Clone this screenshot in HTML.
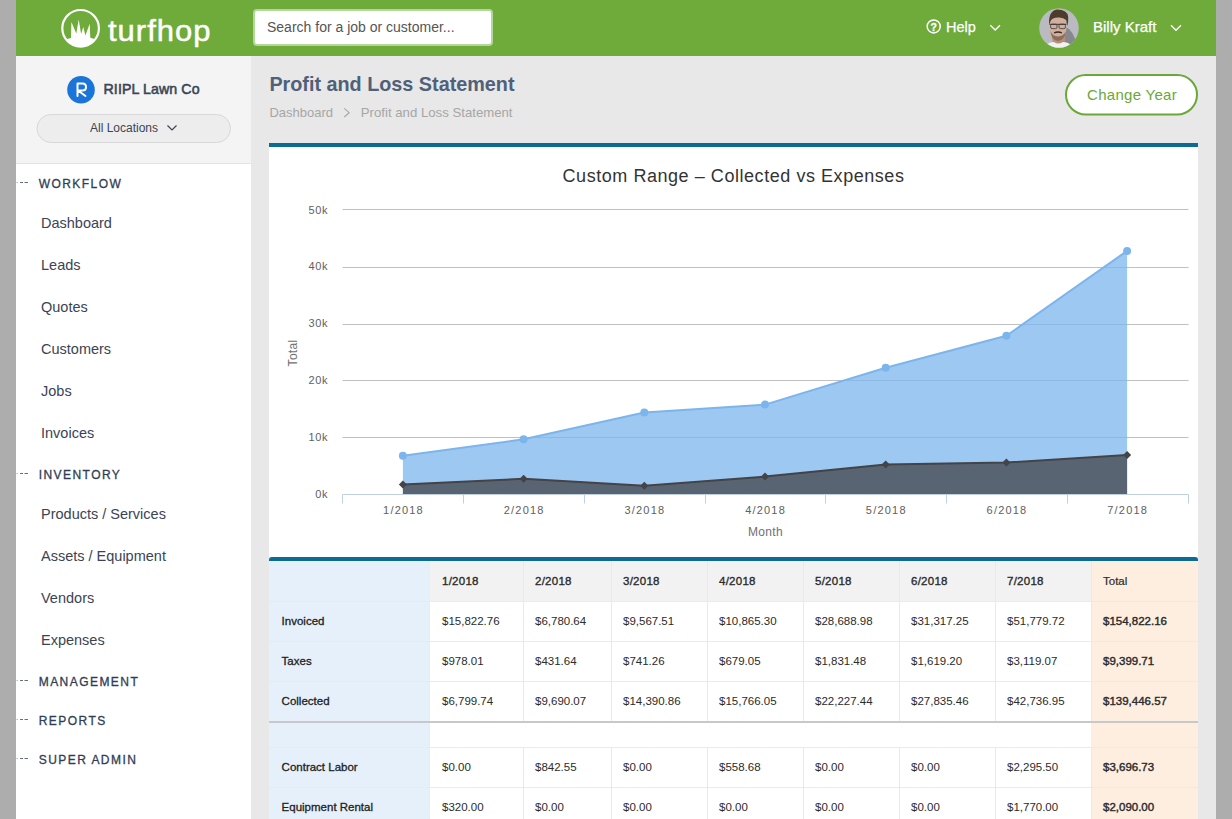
<!DOCTYPE html>
<html><head><meta charset="utf-8"><title>Profit and Loss Statement</title>
<style>
*{margin:0;padding:0}
html,body{width:1232px;height:819px;overflow:hidden;background:#adadad;font-family:"Liberation Sans",sans-serif}
</style></head><body>
<svg style="position:absolute;left:0;top:0" width="1232" height="819" viewBox="0 0 1232 819" font-family="Liberation Sans, sans-serif">
<rect x="0" y="0" width="1232" height="819" fill="#adadad"/>
<rect x="16" y="0" width="1200" height="819" fill="#e8e8e8"/>
<rect x="16" y="0" width="1200" height="56" fill="#6eab3b"/>
<rect x="16" y="56" width="235" height="763" fill="#fff"/>
<rect x="16" y="56" width="235" height="107" fill="#f4f4f4"/>
<rect x="16" y="163" width="235" height="1" fill="#e3e3e3"/>
<circle cx="80.6" cy="28.3" r="18.3" fill="none" stroke="#fff" stroke-width="2.2"/>
<path transform="translate(58 6)" d="M8 33.3 L13 32 L13.4 16.1 L18.3 27.4 L20.7 13.4 L23.1 28 L25.3 21 L27.4 29.6 L31.7 17.7 L32.3 31.7 L37.2 33.3 A18.3 18.3 0 0 1 8 33.3 Z" fill="#fff"/>
<g transform="translate(0 40.7) scale(1 0.95) translate(0 -40.7)"><text x="108.0" y="40.7" font-size="31" fill="#fff" font-weight="normal" letter-spacing="1" text-anchor="start" stroke="#fff" stroke-width="0.5">turfhop</text></g>
<rect x="254" y="10" width="238" height="35" rx="3" fill="#fff" stroke="#b4d59b" stroke-width="2"/>
<text x="267.0" y="31.7" font-size="14" fill="#555" font-weight="normal" letter-spacing="0" text-anchor="start" >Search for a job or customer...</text>
<circle cx="933.7" cy="26.4" r="6.5" fill="none" stroke="#fff" stroke-width="1.5"/>
<text x="933.8" y="30.6" font-size="10.5" fill="#fff" font-weight="bold" letter-spacing="0" text-anchor="middle" stroke="#fff" stroke-width="0.3">?</text>
<text x="946.0" y="31.8" font-size="14.5" fill="#fff" font-weight="normal" letter-spacing="0" text-anchor="start" stroke="#fff" stroke-width="0.25">Help</text>
<path d="M990.3 25.2 L995.2 30 L1000 25.2" fill="none" stroke="#fff" stroke-width="1.4"/>
<clipPath id="av"><circle cx="1059" cy="28" r="19.8"/></clipPath><filter id="bl" x="-20%" y="-20%" width="140%" height="140%"><feGaussianBlur stdDeviation="0.7"/></filter>
<g clip-path="url(#av)"><rect x="1038" y="7" width="42" height="42" fill="#b9bbc0"/><g filter="url(#bl)"><path d="M1064 26 Q1074 30 1077 46 L1062 48 Z" fill="#86888e"/><path d="M1052 37 Q1053 46 1056 48 L1063 48 Q1066 44 1065 37 Z" fill="#b8907a"/><path d="M1050 20 Q1050 15 1058 15 Q1066.5 15 1066.5 20 L1066.3 30 Q1066 39 1058 39.5 Q1050.3 39 1050 30 Z" fill="#d2ae9c"/><path d="M1049.2 25 Q1048 11 1057 9.5 Q1067.5 9.5 1068.2 17 Q1068.5 22 1067.2 26 L1066.2 20 Q1063 17 1058 17.5 Q1052 17.5 1050.6 21 Z" fill="#4d3a2f"/><path d="M1050.5 31 Q1051 40 1058 41 Q1065 40 1066 31 Q1064 36 1058 36.5 Q1052 36 1050.5 31 Z" fill="#8c6c5c"/><path d="M1054 33 Q1058 31 1062 33" stroke="#3b2a22" stroke-width="1.3" fill="none"/><path d="M1043 50 Q1046 42 1054 42 Q1058 45 1063 42 Q1071 42 1074 50 Z" fill="#f2f2f2"/></g><path d="M1049.5 24.3 H1066.5" stroke="#333" stroke-width="1"/><rect x="1050.6" y="24.2" width="6.4" height="4.4" rx="1.5" fill="none" stroke="#3a3a3a" stroke-width="0.8"/><rect x="1059" y="24.2" width="6.4" height="4.4" rx="1.5" fill="none" stroke="#3a3a3a" stroke-width="0.8"/></g>
<text x="1093.0" y="32.0" font-size="15" fill="#fff" font-weight="normal" letter-spacing="0" text-anchor="start" stroke="#fff" stroke-width="0.25">Billy Kraft</text>
<path d="M1171 25.3 L1176 30.2 L1181 25.3" fill="none" stroke="#fff" stroke-width="1.4"/>
<circle cx="81" cy="89.8" r="13.8" fill="#1b74d8"/>
<path d="M77.5 96 V83.5 H82.5 Q86 83.5 86 87 Q86 90.5 82.5 90.5 H78 L85.5 96" fill="none" stroke="#fff" stroke-width="2" stroke-linecap="round" stroke-linejoin="round"/>
<text x="103.5" y="94.4" font-size="14.2" fill="#3a4656" font-weight="normal" letter-spacing="0.1" text-anchor="start" stroke="#3a4656" stroke-width="0.55">RIIPL Lawn Co</text>
<rect x="37" y="114.5" width="193.5" height="28" rx="14" fill="#ededed" stroke="#d8d8d8" stroke-width="1"/>
<text x="90.0" y="132.1" font-size="12" fill="#3a4656" font-weight="normal" letter-spacing="0" text-anchor="start" >All Locations</text>
<path d="M167.5 125.5 L172 130 L176.5 125.5" fill="none" stroke="#3a4656" stroke-width="1.2"/>
<path d="M16.5 182.5 H18" stroke="#b5bbc6" stroke-width="1"/><path d="M20 182.5 H23 M24.5 182.5 H28" stroke="#646e84" stroke-width="1"/>
<text x="38.7" y="188.0" font-size="12" fill="#2f3e56" font-weight="normal" letter-spacing="1.45" text-anchor="start" stroke="#2f3e56" stroke-width="0.3">WORKFLOW</text>
<text x="41.0" y="227.6" font-size="14.5" fill="#3b4454" font-weight="normal" letter-spacing="0" text-anchor="start" >Dashboard</text>
<text x="41.0" y="269.6" font-size="14.5" fill="#3b4454" font-weight="normal" letter-spacing="0" text-anchor="start" >Leads</text>
<text x="41.0" y="311.6" font-size="14.5" fill="#3b4454" font-weight="normal" letter-spacing="0" text-anchor="start" >Quotes</text>
<text x="41.0" y="353.6" font-size="14.5" fill="#3b4454" font-weight="normal" letter-spacing="0" text-anchor="start" >Customers</text>
<text x="41.0" y="395.6" font-size="14.5" fill="#3b4454" font-weight="normal" letter-spacing="0" text-anchor="start" >Jobs</text>
<text x="41.0" y="437.6" font-size="14.5" fill="#3b4454" font-weight="normal" letter-spacing="0" text-anchor="start" >Invoices</text>
<path d="M16.5 473.5 H18" stroke="#b5bbc6" stroke-width="1"/><path d="M20 473.5 H23 M24.5 473.5 H28" stroke="#646e84" stroke-width="1"/>
<text x="38.7" y="479.0" font-size="12" fill="#2f3e56" font-weight="normal" letter-spacing="1.45" text-anchor="start" stroke="#2f3e56" stroke-width="0.3">INVENTORY</text>
<text x="41.0" y="518.6" font-size="14.5" fill="#3b4454" font-weight="normal" letter-spacing="0" text-anchor="start" >Products / Services</text>
<text x="41.0" y="560.6" font-size="14.5" fill="#3b4454" font-weight="normal" letter-spacing="0" text-anchor="start" >Assets / Equipment</text>
<text x="41.0" y="602.6" font-size="14.5" fill="#3b4454" font-weight="normal" letter-spacing="0" text-anchor="start" >Vendors</text>
<text x="41.0" y="644.6" font-size="14.5" fill="#3b4454" font-weight="normal" letter-spacing="0" text-anchor="start" >Expenses</text>
<path d="M16.5 680.5 H18" stroke="#b5bbc6" stroke-width="1"/><path d="M20 680.5 H23 M24.5 680.5 H28" stroke="#646e84" stroke-width="1"/>
<text x="38.7" y="686.0" font-size="12" fill="#2f3e56" font-weight="normal" letter-spacing="1.45" text-anchor="start" stroke="#2f3e56" stroke-width="0.3">MANAGEMENT</text>
<path d="M16.5 719.5 H18" stroke="#b5bbc6" stroke-width="1"/><path d="M20 719.5 H23 M24.5 719.5 H28" stroke="#646e84" stroke-width="1"/>
<text x="38.7" y="725.0" font-size="12" fill="#2f3e56" font-weight="normal" letter-spacing="1.45" text-anchor="start" stroke="#2f3e56" stroke-width="0.3">REPORTS</text>
<path d="M16.5 758.5 H18" stroke="#b5bbc6" stroke-width="1"/><path d="M20 758.5 H23 M24.5 758.5 H28" stroke="#646e84" stroke-width="1"/>
<text x="38.7" y="764.0" font-size="12" fill="#2f3e56" font-weight="normal" letter-spacing="1.45" text-anchor="start" stroke="#2f3e56" stroke-width="0.3">SUPER ADMIN</text>
<text x="269.4" y="90.6" font-size="19.8" fill="#4f6078" font-weight="bold" letter-spacing="0" text-anchor="start" >Profit and Loss Statement</text>
<text x="269.4" y="117.0" font-size="13" fill="#a6a6a6" font-weight="normal" letter-spacing="0" text-anchor="start" >Dashboard</text>
<path d="M344.2 108.3 L349.2 112.7 L344.2 117" fill="none" stroke="#a6a6a6" stroke-width="1.1"/>
<text x="360.8" y="117.0" font-size="13.2" fill="#a6a6a6" font-weight="normal" letter-spacing="0" text-anchor="start" >Profit and Loss Statement</text>
<rect x="1066" y="75" width="131" height="39.5" rx="19.75" fill="#fff" stroke="#6aa838" stroke-width="2"/>
<text x="1087.0" y="99.6" font-size="15" fill="#6aa838" font-weight="normal" letter-spacing="0.3" text-anchor="start" >Change Year</text>
<rect x="269" y="143" width="929" height="414" fill="#fff"/>
<rect x="269" y="143" width="929" height="4" fill="#0b6b93"/>
<path d="M342.5 209.5 H1188.5" stroke="#c0c0c0" stroke-width="1"/>
<path d="M342.5 267.5 H1188.5" stroke="#c0c0c0" stroke-width="1"/>
<path d="M342.5 324.5 H1188.5" stroke="#c0c0c0" stroke-width="1"/>
<path d="M342.5 380.5 H1188.5" stroke="#c0c0c0" stroke-width="1"/>
<path d="M342.5 437.5 H1188.5" stroke="#c0c0c0" stroke-width="1"/>
<path d="M402.9 494.5 L402.9 455.7 523.6 439.3 644.3 412.5 765.0 404.6 885.7 367.8 1006.4 335.8 1127.1 250.9 L1127.1 494.5 Z" fill="#7cb5ec" fill-opacity="0.75"/>
<path d="M402.9 455.7 523.6 439.3 644.3 412.5 765.0 404.6 885.7 367.8 1006.4 335.8 1127.1 250.9" fill="none" stroke="#7cb5ec" stroke-width="2" stroke-linejoin="round"/>
<path d="M402.9 494.5 L402.9 484.5 523.6 478.8 644.3 485.8 765.0 476.6 885.7 464.6 1006.4 462.6 1127.1 455.0 L1127.1 494.5 Z" fill="#434348" fill-opacity="0.75"/>
<path d="M402.9 484.5 523.6 478.8 644.3 485.8 765.0 476.6 885.7 464.6 1006.4 462.6 1127.1 455.0" fill="none" stroke="#434348" stroke-width="2" stroke-linejoin="round"/>
<circle cx="402.9" cy="455.7" r="4" fill="#7cb5ec"/>
<circle cx="523.6" cy="439.3" r="4" fill="#7cb5ec"/>
<circle cx="644.3" cy="412.5" r="4" fill="#7cb5ec"/>
<circle cx="765.0" cy="404.6" r="4" fill="#7cb5ec"/>
<circle cx="885.7" cy="367.8" r="4" fill="#7cb5ec"/>
<circle cx="1006.4" cy="335.8" r="4" fill="#7cb5ec"/>
<circle cx="1127.1" cy="250.9" r="4" fill="#7cb5ec"/>
<path d="M402.9 480.5 l4 4 l-4 4 l-4 -4 Z" fill="#434348"/>
<path d="M523.6 474.8 l4 4 l-4 4 l-4 -4 Z" fill="#434348"/>
<path d="M644.3 481.8 l4 4 l-4 4 l-4 -4 Z" fill="#434348"/>
<path d="M765.0 472.6 l4 4 l-4 4 l-4 -4 Z" fill="#434348"/>
<path d="M885.7 460.6 l4 4 l-4 4 l-4 -4 Z" fill="#434348"/>
<path d="M1006.4 458.6 l4 4 l-4 4 l-4 -4 Z" fill="#434348"/>
<path d="M1127.1 451.0 l4 4 l-4 4 l-4 -4 Z" fill="#434348"/>
<path d="M342.5 494.5 H1188.5" stroke="#c0d0e0" stroke-width="1"/>
<path d="M342.5 494.5 V503.5" stroke="#c0d0e0" stroke-width="1"/>
<path d="M463.5 494.5 V503.5" stroke="#c0d0e0" stroke-width="1"/>
<path d="M584.5 494.5 V503.5" stroke="#c0d0e0" stroke-width="1"/>
<path d="M705.5 494.5 V503.5" stroke="#c0d0e0" stroke-width="1"/>
<path d="M825.5 494.5 V503.5" stroke="#c0d0e0" stroke-width="1"/>
<path d="M946.5 494.5 V503.5" stroke="#c0d0e0" stroke-width="1"/>
<path d="M1067.5 494.5 V503.5" stroke="#c0d0e0" stroke-width="1"/>
<path d="M1188.5 494.5 V503.5" stroke="#c0d0e0" stroke-width="1"/>
<text x="328.0" y="498.0" font-size="11" fill="#606060" font-weight="normal" letter-spacing="0.6" text-anchor="end" >0k</text>
<text x="328.0" y="441.0" font-size="11" fill="#606060" font-weight="normal" letter-spacing="0.6" text-anchor="end" >10k</text>
<text x="328.0" y="384.0" font-size="11" fill="#606060" font-weight="normal" letter-spacing="0.6" text-anchor="end" >20k</text>
<text x="328.0" y="327.0" font-size="11" fill="#606060" font-weight="normal" letter-spacing="0.6" text-anchor="end" >30k</text>
<text x="328.0" y="270.0" font-size="11" fill="#606060" font-weight="normal" letter-spacing="0.6" text-anchor="end" >40k</text>
<text x="328.0" y="213.7" font-size="11" fill="#606060" font-weight="normal" letter-spacing="0.6" text-anchor="end" >50k</text>
<text x="403.5" y="514.0" font-size="11" fill="#606060" font-weight="normal" letter-spacing="1.2" text-anchor="middle" >1/2018</text>
<text x="524.2" y="514.0" font-size="11" fill="#606060" font-weight="normal" letter-spacing="1.2" text-anchor="middle" >2/2018</text>
<text x="644.9" y="514.0" font-size="11" fill="#606060" font-weight="normal" letter-spacing="1.2" text-anchor="middle" >3/2018</text>
<text x="765.6" y="514.0" font-size="11" fill="#606060" font-weight="normal" letter-spacing="1.2" text-anchor="middle" >4/2018</text>
<text x="886.3" y="514.0" font-size="11" fill="#606060" font-weight="normal" letter-spacing="1.2" text-anchor="middle" >5/2018</text>
<text x="1007.0" y="514.0" font-size="11" fill="#606060" font-weight="normal" letter-spacing="1.2" text-anchor="middle" >6/2018</text>
<text x="1127.7" y="514.0" font-size="11" fill="#606060" font-weight="normal" letter-spacing="1.2" text-anchor="middle" >7/2018</text>
<text x="765.5" y="536.0" font-size="12" fill="#707070" font-weight="normal" letter-spacing="0.3" text-anchor="middle" >Month</text>
<text x="0" y="0" font-size="12" fill="#707070" letter-spacing="0.3" text-anchor="middle" transform="translate(297 353) rotate(-90)">Total</text>
<text x="733.5" y="182.0" font-size="18" fill="#333" font-weight="normal" letter-spacing="0.55" text-anchor="middle" >Custom Range – Collected vs Expenses</text>
<path d="M269 561 V560 Q269 557 272 557 H1195 Q1198 557 1198 560 V561 Z" fill="#0b6b93"/>
<rect x="269" y="561" width="929" height="258" fill="#fff"/>
<rect x="269" y="561" width="160" height="258" fill="#e5f0fa"/>
<rect x="429" y="561" width="1" height="258" fill="#ececec"/>
<rect x="430" y="561" width="661" height="40" fill="#f2f2f2"/>
<rect x="1091" y="561" width="107" height="258" fill="#fdeee0"/>
<rect x="269" y="601" width="929" height="1" fill="#e9e9e9" fill-opacity="0.9"/>
<rect x="269" y="641" width="929" height="1" fill="#e9e9e9" fill-opacity="0.9"/>
<rect x="269" y="681" width="929" height="1" fill="#e9e9e9" fill-opacity="0.9"/>
<rect x="269" y="747" width="929" height="1" fill="#e9e9e9" fill-opacity="0.9"/>
<rect x="269" y="787" width="929" height="1" fill="#e9e9e9" fill-opacity="0.9"/>
<rect x="269" y="721" width="929" height="2" fill="#c8c8c8"/>
<rect x="523" y="561" width="1" height="160" fill="#e9e9e9"/>
<rect x="523" y="747" width="1" height="72" fill="#e9e9e9"/>
<rect x="611" y="561" width="1" height="160" fill="#e9e9e9"/>
<rect x="611" y="747" width="1" height="72" fill="#e9e9e9"/>
<rect x="707" y="561" width="1" height="160" fill="#e9e9e9"/>
<rect x="707" y="747" width="1" height="72" fill="#e9e9e9"/>
<rect x="803" y="561" width="1" height="160" fill="#e9e9e9"/>
<rect x="803" y="747" width="1" height="72" fill="#e9e9e9"/>
<rect x="899" y="561" width="1" height="160" fill="#e9e9e9"/>
<rect x="899" y="747" width="1" height="72" fill="#e9e9e9"/>
<rect x="995" y="561" width="1" height="160" fill="#e9e9e9"/>
<rect x="995" y="747" width="1" height="72" fill="#e9e9e9"/>
<rect x="1091" y="561" width="1" height="160" fill="#e9e9e9"/>
<rect x="1091" y="747" width="1" height="72" fill="#e9e9e9"/>
<text x="442.0" y="585.0" font-size="11.5" fill="#2b2b2b" font-weight="normal" letter-spacing="0.25" text-anchor="start" stroke="#2b2b2b" stroke-width="0.35">1/2018</text>
<text x="535.0" y="585.0" font-size="11.5" fill="#2b2b2b" font-weight="normal" letter-spacing="0.25" text-anchor="start" stroke="#2b2b2b" stroke-width="0.35">2/2018</text>
<text x="623.0" y="585.0" font-size="11.5" fill="#2b2b2b" font-weight="normal" letter-spacing="0.25" text-anchor="start" stroke="#2b2b2b" stroke-width="0.35">3/2018</text>
<text x="719.0" y="585.0" font-size="11.5" fill="#2b2b2b" font-weight="normal" letter-spacing="0.25" text-anchor="start" stroke="#2b2b2b" stroke-width="0.35">4/2018</text>
<text x="815.0" y="585.0" font-size="11.5" fill="#2b2b2b" font-weight="normal" letter-spacing="0.25" text-anchor="start" stroke="#2b2b2b" stroke-width="0.35">5/2018</text>
<text x="911.0" y="585.0" font-size="11.5" fill="#2b2b2b" font-weight="normal" letter-spacing="0.25" text-anchor="start" stroke="#2b2b2b" stroke-width="0.35">6/2018</text>
<text x="1007.0" y="585.0" font-size="11.5" fill="#2b2b2b" font-weight="normal" letter-spacing="0.25" text-anchor="start" stroke="#2b2b2b" stroke-width="0.35">7/2018</text>
<text x="1103.0" y="585.0" font-size="11.5" fill="#2b2b2b" font-weight="normal" letter-spacing="0" text-anchor="start" stroke="#2b2b2b" stroke-width="0.2">Total</text>
<text x="281.6" y="625.0" font-size="11.5" fill="#222" font-weight="normal" letter-spacing="0" text-anchor="start" stroke="#222" stroke-width="0.3">Invoiced</text>
<text x="442.0" y="625.0" font-size="11.5" fill="#2b2b2b" font-weight="normal" letter-spacing="0" text-anchor="start" >$15,822.76</text>
<text x="535.0" y="625.0" font-size="11.5" fill="#2b2b2b" font-weight="normal" letter-spacing="0" text-anchor="start" >$6,780.64</text>
<text x="623.0" y="625.0" font-size="11.5" fill="#2b2b2b" font-weight="normal" letter-spacing="0" text-anchor="start" >$9,567.51</text>
<text x="719.0" y="625.0" font-size="11.5" fill="#2b2b2b" font-weight="normal" letter-spacing="0" text-anchor="start" >$10,865.30</text>
<text x="815.0" y="625.0" font-size="11.5" fill="#2b2b2b" font-weight="normal" letter-spacing="0" text-anchor="start" >$28,688.98</text>
<text x="911.0" y="625.0" font-size="11.5" fill="#2b2b2b" font-weight="normal" letter-spacing="0" text-anchor="start" >$31,317.25</text>
<text x="1007.0" y="625.0" font-size="11.5" fill="#2b2b2b" font-weight="normal" letter-spacing="0" text-anchor="start" >$51,779.72</text>
<text x="1103.0" y="625.0" font-size="11.5" fill="#2b2b2b" font-weight="normal" letter-spacing="0" text-anchor="start" stroke="#2b2b2b" stroke-width="0.4">$154,822.16</text>
<text x="281.6" y="665.0" font-size="11.5" fill="#222" font-weight="normal" letter-spacing="0" text-anchor="start" stroke="#222" stroke-width="0.3">Taxes</text>
<text x="442.0" y="665.0" font-size="11.5" fill="#2b2b2b" font-weight="normal" letter-spacing="0" text-anchor="start" >$978.01</text>
<text x="535.0" y="665.0" font-size="11.5" fill="#2b2b2b" font-weight="normal" letter-spacing="0" text-anchor="start" >$431.64</text>
<text x="623.0" y="665.0" font-size="11.5" fill="#2b2b2b" font-weight="normal" letter-spacing="0" text-anchor="start" >$741.26</text>
<text x="719.0" y="665.0" font-size="11.5" fill="#2b2b2b" font-weight="normal" letter-spacing="0" text-anchor="start" >$679.05</text>
<text x="815.0" y="665.0" font-size="11.5" fill="#2b2b2b" font-weight="normal" letter-spacing="0" text-anchor="start" >$1,831.48</text>
<text x="911.0" y="665.0" font-size="11.5" fill="#2b2b2b" font-weight="normal" letter-spacing="0" text-anchor="start" >$1,619.20</text>
<text x="1007.0" y="665.0" font-size="11.5" fill="#2b2b2b" font-weight="normal" letter-spacing="0" text-anchor="start" >$3,119.07</text>
<text x="1103.0" y="665.0" font-size="11.5" fill="#2b2b2b" font-weight="normal" letter-spacing="0" text-anchor="start" stroke="#2b2b2b" stroke-width="0.4">$9,399.71</text>
<text x="281.6" y="705.0" font-size="11.5" fill="#222" font-weight="normal" letter-spacing="0" text-anchor="start" stroke="#222" stroke-width="0.3">Collected</text>
<text x="442.0" y="705.0" font-size="11.5" fill="#2b2b2b" font-weight="normal" letter-spacing="0" text-anchor="start" >$6,799.74</text>
<text x="535.0" y="705.0" font-size="11.5" fill="#2b2b2b" font-weight="normal" letter-spacing="0" text-anchor="start" >$9,690.07</text>
<text x="623.0" y="705.0" font-size="11.5" fill="#2b2b2b" font-weight="normal" letter-spacing="0" text-anchor="start" >$14,390.86</text>
<text x="719.0" y="705.0" font-size="11.5" fill="#2b2b2b" font-weight="normal" letter-spacing="0" text-anchor="start" >$15,766.05</text>
<text x="815.0" y="705.0" font-size="11.5" fill="#2b2b2b" font-weight="normal" letter-spacing="0" text-anchor="start" >$22,227.44</text>
<text x="911.0" y="705.0" font-size="11.5" fill="#2b2b2b" font-weight="normal" letter-spacing="0" text-anchor="start" >$27,835.46</text>
<text x="1007.0" y="705.0" font-size="11.5" fill="#2b2b2b" font-weight="normal" letter-spacing="0" text-anchor="start" >$42,736.95</text>
<text x="1103.0" y="705.0" font-size="11.5" fill="#2b2b2b" font-weight="normal" letter-spacing="0" text-anchor="start" stroke="#2b2b2b" stroke-width="0.4">$139,446.57</text>
<text x="281.6" y="771.0" font-size="11.5" fill="#222" font-weight="normal" letter-spacing="0" text-anchor="start" stroke="#222" stroke-width="0.3">Contract Labor</text>
<text x="442.0" y="771.0" font-size="11.5" fill="#2b2b2b" font-weight="normal" letter-spacing="0" text-anchor="start" >$0.00</text>
<text x="535.0" y="771.0" font-size="11.5" fill="#2b2b2b" font-weight="normal" letter-spacing="0" text-anchor="start" >$842.55</text>
<text x="623.0" y="771.0" font-size="11.5" fill="#2b2b2b" font-weight="normal" letter-spacing="0" text-anchor="start" >$0.00</text>
<text x="719.0" y="771.0" font-size="11.5" fill="#2b2b2b" font-weight="normal" letter-spacing="0" text-anchor="start" >$558.68</text>
<text x="815.0" y="771.0" font-size="11.5" fill="#2b2b2b" font-weight="normal" letter-spacing="0" text-anchor="start" >$0.00</text>
<text x="911.0" y="771.0" font-size="11.5" fill="#2b2b2b" font-weight="normal" letter-spacing="0" text-anchor="start" >$0.00</text>
<text x="1007.0" y="771.0" font-size="11.5" fill="#2b2b2b" font-weight="normal" letter-spacing="0" text-anchor="start" >$2,295.50</text>
<text x="1103.0" y="771.0" font-size="11.5" fill="#2b2b2b" font-weight="normal" letter-spacing="0" text-anchor="start" stroke="#2b2b2b" stroke-width="0.4">$3,696.73</text>
<text x="281.6" y="811.0" font-size="11.5" fill="#222" font-weight="normal" letter-spacing="0" text-anchor="start" stroke="#222" stroke-width="0.3">Equipment Rental</text>
<text x="442.0" y="811.0" font-size="11.5" fill="#2b2b2b" font-weight="normal" letter-spacing="0" text-anchor="start" >$320.00</text>
<text x="535.0" y="811.0" font-size="11.5" fill="#2b2b2b" font-weight="normal" letter-spacing="0" text-anchor="start" >$0.00</text>
<text x="623.0" y="811.0" font-size="11.5" fill="#2b2b2b" font-weight="normal" letter-spacing="0" text-anchor="start" >$0.00</text>
<text x="719.0" y="811.0" font-size="11.5" fill="#2b2b2b" font-weight="normal" letter-spacing="0" text-anchor="start" >$0.00</text>
<text x="815.0" y="811.0" font-size="11.5" fill="#2b2b2b" font-weight="normal" letter-spacing="0" text-anchor="start" >$0.00</text>
<text x="911.0" y="811.0" font-size="11.5" fill="#2b2b2b" font-weight="normal" letter-spacing="0" text-anchor="start" >$0.00</text>
<text x="1007.0" y="811.0" font-size="11.5" fill="#2b2b2b" font-weight="normal" letter-spacing="0" text-anchor="start" >$1,770.00</text>
<text x="1103.0" y="811.0" font-size="11.5" fill="#2b2b2b" font-weight="normal" letter-spacing="0" text-anchor="start" stroke="#2b2b2b" stroke-width="0.4">$2,090.00</text>
</svg>
</body></html>
